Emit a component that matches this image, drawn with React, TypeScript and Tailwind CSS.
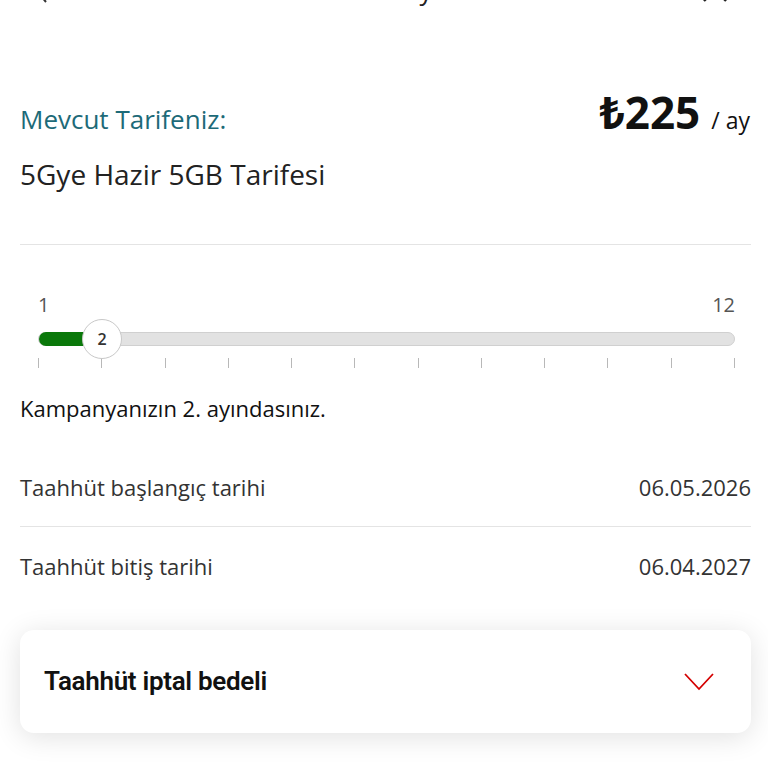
import React from 'react';

const ticks = Array.from({ length: 12 }, (_, i) => i);

function InfoRow({ label, value, border }: { label: string; value: string; border?: boolean }) {
  return (
    <div className={`flex items-center justify-between h-[79px] ${border ? 'border-b border-[#e4e4e4]' : ''}`}>
      <span className="text-[22px] text-[#333]">{label}</span>
      <span className="text-[22px] text-[#333]">{value}</span>
    </div>
  );
}

export default function App() {
  const current = 2;
  const total = 12;
  const pct = ((current - 1) / (total - 1)) * 100;

  return (
    <div className="w-[768px] h-[768px] overflow-hidden bg-white text-[#222]" style={{ fontFamily: '"Open Sans", "Noto Sans", sans-serif' }}>
      {/* header, mostly scrolled away */}
      <div className="relative h-[20px] overflow-hidden">
        <div className="absolute left-0 right-0 -top-[30px] flex items-center justify-between pl-[34px] pr-[40px] h-[40px]">
          <svg width="14" height="26" viewBox="0 0 14 26" fill="none" stroke="#333" strokeWidth="2">
            <path d="M12 1 L2 13 L12 25" />
          </svg>
          <span className="text-[26px] text-[#222]">Taahhüt Detaylarım</span>
          <svg width="26" height="26" viewBox="0 0 26 26" fill="none" stroke="#222" strokeWidth="2.4">
            <path d="M2 2 L24 24 M24 2 L2 24" />
          </svg>
        </div>
      </div>

      <div className="pl-[20px] pr-[17px]">
        <div className="flex items-end justify-between mt-[70px]">
          <span className="text-[26px] text-[#1d6a78] leading-none pb-[2px]">Mevcut Tarifeniz:</span>
          <div className="flex items-end gap-[11px] pr-[1px]">
            <span className="text-[44px] font-bold leading-none text-[#111]">₺225</span>
            <span className="text-[23px] leading-none pb-[2px] text-[#111]">/ ay</span>
          </div>
        </div>
        <div className="mt-[26px] text-[28px] leading-none text-[#222]">5Gye Hazir 5GB Tarifesi</div>

        <div className="mt-[56px] border-t border-[#e4e4e4]" />

        {/* slider */}
        <div className="mt-[50px] pl-[18px] pr-[16px]">
          <div className="flex justify-between text-[20px] leading-none text-[#555]">
            <span>1</span>
            <span>12</span>
          </div>
          <div className="relative mt-[17px] h-[14px] rounded-full bg-[#e2e2e2] border border-[#d0d0d0]">
            <div className="absolute left-0 top-[-1px] bottom-[-1px] rounded-full bg-[#0a780a]" style={{ width: `${pct}%` }} />
            <div
              className="absolute top-1/2 -translate-x-1/2 -translate-y-1/2 w-[40px] h-[40px] rounded-full bg-white border border-[#c8c8c8] flex items-center justify-center text-[16px] font-semibold text-[#333]"
              style={{ left: `${pct}%` }}
            >
              2
            </div>
          </div>
          <div className="mt-[12px] flex justify-between">
            {ticks.map((t) => (
              <div key={t} className="w-px h-[10px] bg-[#b8b8b8]" />
            ))}
          </div>
        </div>

        <div className="mt-[29px] text-[22px] leading-none text-[#111]">Kampanyanızın 2. ayındasınız.</div>

        <div className="mt-[29px]">
          <InfoRow label="Taahhüt başlangıç tarihi" value="06.05.2026" border />
          <InfoRow label="Taahhüt bitiş tarihi" value="06.04.2027" />
        </div>

        <div className="mt-[24px] h-[103px] rounded-[14px] bg-white shadow-[0_4px_28px_rgba(0,0,0,0.12)] flex items-center justify-between pl-[24px] pr-[37px]">
          <span className="text-[26px] font-semibold text-[#111] tracking-[-0.3px]" style={{ fontFamily: '"Roboto", "Liberation Sans", sans-serif' }}>
            Taahhüt iptal bedeli
          </span>
          <svg width="30" height="18" viewBox="0 0 30 18" fill="none" stroke="#d40000" strokeWidth="1.8">
            <path d="M1 1 L15 16 L29 1" />
          </svg>
        </div>
      </div>
    </div>
  );
}
